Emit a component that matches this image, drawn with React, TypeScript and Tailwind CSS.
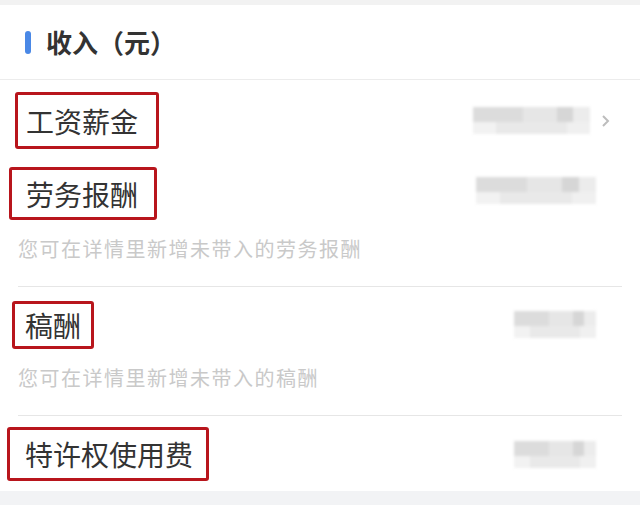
import React from 'react';

interface IncomeItem {
  name: string;
  boxClass: string;
  valueClass: string;
  hint?: string;
  chevron?: boolean;
}

const items: IncomeItem[] = [
  { name: '工资薪金', boxClass: 'mt-[12px] ml-[15px] w-[144px] h-[57px] pl-[8px]', valueClass: 'w-[117px]', chevron: true },
  { name: '劳务报酬', boxClass: 'mt-[18px] ml-[9px] w-[148px] h-[53px] pl-[14px]', valueClass: 'w-[120px]', hint: '您可在详情里新增未带入的劳务报酬' },
  { name: '稿酬', boxClass: 'mt-[14px] ml-[12px] w-[82px] h-[48px] pl-[10px]', valueClass: 'w-[82px]', hint: '您可在详情里新增未带入的稿酬' },
  { name: '特许权使用费', boxClass: 'mt-[11px] ml-[7px] w-[202px] h-[54px] pl-[15px]', valueClass: 'w-[82px]' },
];

// blurred amount placeholder, as in the screenshot
const BlurValue: React.FC<{ className: string }> = ({ className }) => (
  <div className={`flex flex-col gap-0 blur-[1.5px] ${className}`}>
    <div className="flex h-[15px]">
      <div className="flex-[3] bg-[#dcdcdc]" />
      <div className="flex-[2] bg-[#e6e6e6]" />
      <div className="flex-[1] bg-[#d6d6d6]" />
      <div className="flex-[1] bg-[#ececec]" />
    </div>
    <div className="flex h-[12px]">
      <div className="flex-[1] bg-[#f2f2f2]" />
      <div className="flex-[3] bg-[#e9e9e9]" />
      <div className="flex-[1] bg-[#f0f0f0]" />
    </div>
  </div>
);

export default function App() {
  return (
    <div className="w-[640px] h-[505px] bg-white flex flex-col font-['Noto_Sans_CJK_SC',sans-serif] overflow-hidden">
      <div className="h-[5px] bg-[#f2f2f2]" />

      {/* header */}
      <div className="h-[75px] flex items-center pl-[25px] border-b border-[#ececec]">
        <div className="w-[6px] h-[23px] rounded-full bg-[#4a88e6]" />
        <span className="ml-[15px] text-[26px] font-bold text-[#333] leading-none">收入（元）</span>
      </div>

      {items.map((item, i) => (
        <div key={item.name}>
          <div className="flex items-center justify-between">
            <div className={`flex items-center border-[3px] border-[#b8151c] rounded-[3px] ${item.boxClass}`}>
              <span className="text-[28px] leading-none text-[#333] whitespace-nowrap">{item.name}</span>
            </div>
            <div className={`flex items-center mt-[12px] ${item.chevron ? 'pr-[28px]' : 'pr-[44px]'}`}>
              <BlurValue className={item.valueClass} />
              {item.chevron && (
                <svg width="12" height="14" viewBox="0 0 12 14" className="ml-[10px]">
                  <path d="M3 2l5 5-5 5" fill="none" stroke="#bdbdbd" strokeWidth="2" />
                </svg>
              )}
            </div>
          </div>
          {item.hint && (
            <>
              <div className="mt-[15px] ml-[18px] h-[28px] leading-[28px] text-[20px] tracking-[1.5px] text-[#c9c9c9] whitespace-nowrap">
                {item.hint}
              </div>
              <div className="mt-[23px] ml-[18px] mr-[18px] h-px bg-[#e6e6e6]" />
            </>
          )}
          {i === items.length - 1 && <div className="h-[10px]" />}
        </div>
      ))}

      <div className="flex-1 bg-[#f2f3f5]" />
    </div>
  );
}
